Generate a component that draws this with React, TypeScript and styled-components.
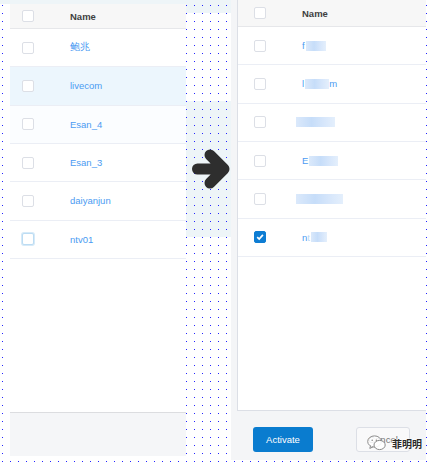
import styled, { createGlobalStyle, css } from 'styled-components';

const dots = (base: string) => css`
  background-color: ${base};
  background-image: linear-gradient(90deg, ${base} 7px, transparent 7px),
    linear-gradient(180deg, ${base} 7px, #2323ff 7px);
  background-size: 8px 8px;
  background-position: 3px 6px;
  background-attachment: fixed;
`;

const GlobalStyle = createGlobalStyle`
  html, body { margin: 0; padding: 0; }
  body {
    font-family: "Liberation Sans", Arial, sans-serif;
    ${dots('#ffffff')}
  }
`;

type Tone = 'hover' | 'soft' | undefined;
type BoxState = 'checked' | 'focus' | undefined;

const leftNames = ['鲍兆', 'livecom', 'Esan_4', 'Esan_3', 'daiyanjun', 'ntv01'];

export default function App() {
  return (
    <>
      <GlobalStyle />
      <Page>
        <LeftColumn>
          <TopBand />
          <ListPanel>
            <Table>
              <HeaderRow $h={25} $inset={12}>
                <Box />
                <NameHead>Name</NameHead>
              </HeaderRow>
              {leftNames.map((name, i) => (
                <Row key={name} $inset={12} $tone={i === 1 ? 'hover' : i === 2 ? 'soft' : undefined}>
                  <Box $state={i === 5 ? 'focus' : undefined} />
                  <NameLink>{name}</NameLink>
                </Row>
              ))}
            </Table>
            <PanelFooter />
          </ListPanel>
        </LeftColumn>

        <Middle>
          <PaleBlock $h={13} />
          <Spacer />
          <PaleBlock $h={136}>
            <svg width="40" height="44" viewBox="0 0 40 44">
              <path
                d="M6.5 22 H32 M19 8 L33 22 L19 36"
                fill="none"
                stroke="#2e2e2e"
                strokeWidth="11"
                strokeLinecap="round"
                strokeLinejoin="round"
              />
            </svg>
          </PaleBlock>
        </Middle>

        <RightFrame>
          <Table $framed>
            <HeaderRow $h={27} $inset={16}>
              <Box />
              <NameHead>Name</NameHead>
            </HeaderRow>
            <Row $inset={16}>
              <Box />
              <NameLink>f<Smudge $w={20} /></NameLink>
            </Row>
            <Row $inset={16}>
              <Box />
              <NameLink>l<Smudge $w={24} />m</NameLink>
            </Row>
            <Row $inset={16}>
              <Box />
              <NameLink><Smudge $w={39} $ml={-6} /></NameLink>
            </Row>
            <Row $inset={16}>
              <Box />
              <NameLink>E<Smudge $w={29} /></NameLink>
            </Row>
            <Row $inset={16}>
              <Box />
              <NameLink><Smudge $w={47} $ml={-6} /></NameLink>
            </Row>
            <Row $inset={16}>
              <Box $state="checked">
                <svg width="10" height="10" viewBox="0 0 10 10">
                  <path d="M2.2 5.2 L4.2 7.1 L7.9 2.9" fill="none" stroke="#fff" strokeWidth="1.7" />
                </svg>
              </Box>
              <NameLink>n<Faint>t</Faint><Smudge $w={16} /></NameLink>
            </Row>
          </Table>
          <Footer>
            <PrimaryButton>Activate</PrimaryButton>
            <GhostButton>Cancel</GhostButton>
            <Watermark>
              <svg width="19" height="16" viewBox="0 0 19 16">
                <ellipse cx="7.5" cy="6.5" rx="6.8" ry="5.6" fill="rgba(255,255,255,0.85)" stroke="#8a8a8a" strokeWidth="1" />
                <path d="M3.5 10.8 L2.8 13.4 L6 11.9" fill="rgba(255,255,255,0.85)" stroke="#8a8a8a" strokeWidth="1" />
                <ellipse cx="12.6" cy="10" rx="5.6" ry="4.6" fill="rgba(255,255,255,0.9)" stroke="#8a8a8a" strokeWidth="1" />
                <circle cx="5.2" cy="5.2" r="0.8" fill="#8a8a8a" />
                <circle cx="9.4" cy="5.2" r="0.8" fill="#8a8a8a" />
              </svg>
              <MarkText>菲明明</MarkText>
            </Watermark>
          </Footer>
        </RightFrame>
      </Page>
    </>
  );
}

const Page = styled.div`
  display: flex;
  align-items: flex-start;
  width: 434px;
  height: 463px;
  overflow: hidden;
`;

const LeftColumn = styled.div`
  width: 186px;
  display: flex;
  flex-direction: column;
`;

const TopBand = styled.div`
  height: 4px;
  background: #eef5f8;
`;

const ListPanel = styled.div`
  margin-left: 10px;
  width: 176px;
  height: 452px;
  display: flex;
  flex-direction: column;
  background: #fff;
`;

const Table = styled.div<{ $framed?: boolean }>`
  flex: 1;
  background: #fff;
  ${p =>
    p.$framed &&
    css`
      flex: none;
      height: 411px;
      box-sizing: border-box;
      border-left: 1px solid #dcdfe6;
      border-bottom: 1px solid #dcdfe6;
    `}
`;

const HeaderRow = styled.div<{ $h: number; $inset: number }>`
  display: grid;
  grid-template-columns: 48px 1fr;
  align-items: center;
  box-sizing: border-box;
  height: ${p => p.$h}px;
  padding-left: ${p => p.$inset}px;
  background: #f7f7f7;
  border-bottom: 1px solid #e6e7ea;
`;

const Row = styled.div<{ $inset: number; $tone?: Tone }>`
  display: grid;
  grid-template-columns: 48px 1fr;
  align-items: center;
  box-sizing: border-box;
  height: 38.33px;
  padding-left: ${p => p.$inset}px;
  border-bottom: 1px solid #ebeef5;
  background: ${p => (p.$tone === 'hover' ? '#ecf6fd' : p.$tone === 'soft' ? '#fbfdff' : '#fff')};
`;

const Box = styled.span<{ $state?: BoxState }>`
  display: flex;
  align-items: center;
  justify-content: center;
  box-sizing: border-box;
  width: 12px;
  height: 12px;
  border-radius: 2px;
  border: 1px solid #dcdfe6;
  background: #fff;
  ${p =>
    p.$state === 'checked' &&
    css`
      border-color: #0e7dd3;
      background: #0e7dd3;
    `}
  ${p =>
    p.$state === 'focus' &&
    css`
      border-color: #bcdcf3;
      box-shadow: 0 0 0 1px #d6eaf8;
    `}
`;

const NameHead = styled.span`
  font-size: 9.5px;
  font-weight: bold;
  color: #3f3f3f;
`;

const NameLink = styled.span`
  display: flex;
  align-items: center;
  font-size: 9.5px;
  color: #4b9bf2;
  white-space: nowrap;
`;

const Faint = styled.span`
  color: #b9d6f8;
`;

const Smudge = styled.span<{ $w: number; $ml?: number }>`
  display: inline-block;
  width: ${p => p.$w}px;
  height: 10px;
  margin-left: ${p => p.$ml ?? 1}px;
  background: linear-gradient(90deg, #dbe9fb, #c6ddf9 40%, #d6e6fb 70%, #e4effc);
  filter: blur(0.6px);
`;

const PanelFooter = styled.div`
  height: 44px;
  box-sizing: border-box;
  background: #f5f6f8;
  border-top: 1px solid #dcdde0;
`;

const Middle = styled.div`
  width: 45px;
  display: flex;
  flex-direction: column;
`;

const PaleBlock = styled.div<{ $h: number }>`
  height: ${p => p.$h}px;
  display: flex;
  align-items: center;
  justify-content: flex-end;
  ${dots('#eef5f8')}
`;

const Spacer = styled.div`
  height: 88px;
`;

const RightFrame = styled.div`
  width: 195px;
  height: 460px;
  box-sizing: border-box;
  padding-left: 6px;
  display: flex;
  flex-direction: column;
  background: #f4f5f7;
`;

const Footer = styled.div`
  flex: 1;
  position: relative;
  display: flex;
  align-items: flex-start;
  gap: 43px;
  padding: 16px 0 0 16px;
`;

const PrimaryButton = styled.button`
  width: 60px;
  height: 25px;
  border: none;
  border-radius: 3px;
  background: #0a7ccf;
  color: #fff;
  font-family: "Liberation Sans", Arial, sans-serif;
  font-size: 9.5px;
  padding: 0;
`;

const GhostButton = styled.button`
  width: 54px;
  height: 25px;
  box-sizing: border-box;
  border: 1px solid #dcdfe6;
  border-radius: 3px;
  background: #f9f9fa;
  color: #777;
  font-family: "Liberation Sans", Arial, sans-serif;
  font-size: 9.5px;
  padding: 0;
`;

const Watermark = styled.div`
  position: absolute;
  left: 130px;
  top: 23px;
  display: flex;
  align-items: center;
  gap: 6px;
`;

const MarkText = styled.span`
  margin-top: 2px;
  font-family: "Noto Sans CJK SC", sans-serif;
  font-size: 10px;
  font-weight: bold;
  color: #2a2a2a;
  text-shadow: 0 0 2px #fff, 0 0 2px #fff;
`;
